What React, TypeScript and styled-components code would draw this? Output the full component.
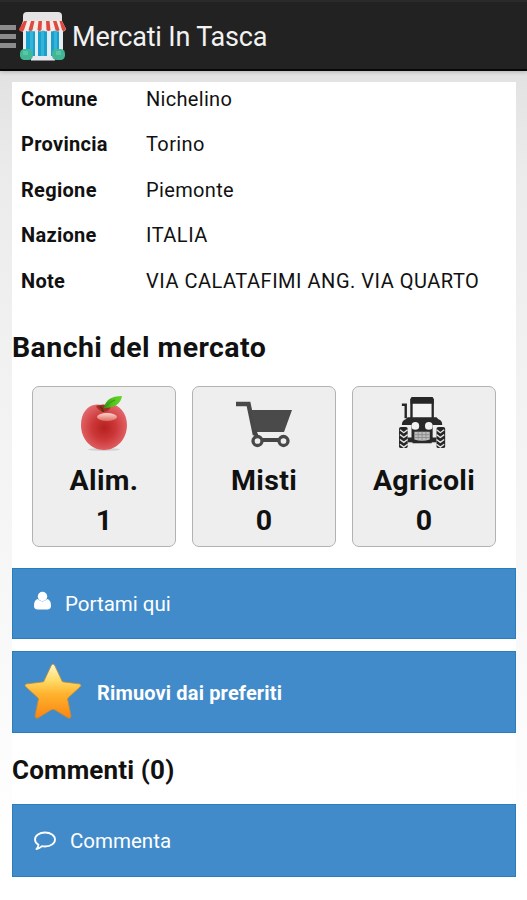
import React from "react";
import styled, { createGlobalStyle } from "styled-components";

const GlobalStyle = createGlobalStyle`
  * { box-sizing: border-box; }
  body {
    margin: 0;
    background: #fff;
    font-family: Roboto, "Liberation Sans", sans-serif;
    color: #111;
  }
  svg { display: block; flex: none; }
`;

const Screen = styled.div`
  width: 527px;
  height: 900px;
  display: flex;
  flex-direction: column;
  overflow: hidden;
  background: linear-gradient(#e2e2e2 70px, #ebebeb 170px, #f1f1f1 360px, #f8f8f8 620px, #fff 850px);
`;

const AppBar = styled.header`
  height: 71px;
  flex: none;
  display: flex;
  align-items: center;
  background: #222;
  border-top: 2px solid #2a2a2a;
  border-bottom: 2px solid #080808;
  box-shadow: 0 1px 4px rgba(0, 0, 0, 0.22);
`;

const MenuLines = styled.div`
  width: 16px;
  height: 23px;
  flex: none;
  display: flex;
  flex-direction: column;
  justify-content: space-between;
  margin-top: 2px;
  span {
    height: 5px;
    background: #8c8c8c;
  }
`;

const AppTitle = styled.h1`
  margin: 2px 0 0 6px;
  font-size: 27px;
  font-weight: 400;
  line-height: 32px;
  letter-spacing: -0.18px;
  color: #f2f2f2;
  white-space: nowrap;
`;

const Panel = styled.main`
  width: 504px;
  flex: 1;
  margin: 11px 0 0 12px;
  background: #fff;
`;

const Details = styled.dl`
  margin: 0;
`;

const DetailRow = styled.div`
  height: 45.4px;
  display: grid;
  grid-template-columns: 125px 1fr;
  padding-left: 9px;
  font-size: 20px;
  line-height: 35px;
`;

const Label = styled.dt`
  font-weight: 700;
  letter-spacing: 0.3px;
`;

const Value = styled.dd<{ $spacing: number }>`
  margin: 0;
  letter-spacing: ${(p) => p.$spacing}px;
  white-space: nowrap;
`;

const Heading = styled.h2<{ $top: number; $size: number; $spacing: number }>`
  margin: ${(p) => p.$top}px 0 0;
  font-size: ${(p) => p.$size}px;
  letter-spacing: ${(p) => p.$spacing}px;
  line-height: 32px;
  font-weight: 700;
`;

const Stalls = styled.div`
  display: flex;
  gap: 16px;
  margin: 22px 20px 21px;
`;

const StallCard = styled.div`
  flex: 1;
  height: 161px;
  display: flex;
  flex-direction: column;
  align-items: center;
  padding-top: 8px;
  background: #eee;
  border: 1.5px solid #b2b2b2;
  border-radius: 7px;
  font-size: 28.5px;
  font-weight: 700;
  line-height: 39.5px;
`;

const StallName = styled.span`
  margin-top: 6.5px;
  letter-spacing: 0.35px;
`;

const Action = styled.button<{ $height: number; $top?: number; $bold?: boolean; $left: number; $gap: number; $spacing: number }>`
  width: 100%;
  height: ${(p) => p.$height}px;
  margin: ${(p) => p.$top ?? 0}px 0 0;
  padding: 2px 0 0 ${(p) => p.$left}px;
  display: flex;
  align-items: center;
  gap: ${(p) => p.$gap}px;
  border: 1px solid #2a7dbd;
  background: #428bca;
  color: #fff;
  font: ${(p) => (p.$bold ? 700 : 400)} ${(p) => (p.$bold ? 20 : 20.5)}px Roboto, "Liberation Sans", sans-serif;
  letter-spacing: ${(p) => p.$spacing}px;
`;

const Raised = styled.span<{ $by: number }>`
  padding-bottom: ${(p) => p.$by}px;
`;

const ShopIcon = () => (
  <svg width="50" height="54" viewBox="0 0 50 54">
    <rect x="7" y="20" width="40" height="30" fill="#e4edf0" />
    <path d="M10 21h9v28h-9zM22 21h9v27h-9zM35 21h8v28h-8z" fill="#1b9fcd" />
    <path d="M14 21h3v28h-3zM25 21h3v27h-3zM38 21h3v28h-3z" fill="#35b4da" />
    <path d="M15 47h24v4.500H15z" fill="#e6eaf0" />
    <path d="M11 3h31q4 0 4 4v6H7V7q0-4 4-4z" fill="#e4e4e4" />
    <path d="M7 12h39l4 8q-1 2.500-3 2.500l-2-1-3 1-3-1-3 1-3-1-3 1-3-1-3 1-3-1-3 1-3-1-3 1-3-1-2 1q-3 0-3-2.500z" fill="#f5ebe7" />
    <path d="M8 12h3l-3 9q-1 1.500-2 1.500-3 0-3-2.500zM15 12h3.500l-2 9q-2 2-4 0zM22.500 12H26l-.500 9q-2 2-4 0zM30 12h3.500l1 9q-2 2-4 0zM37 12h3.500l3 9q-2 2-4 0zM43.500 12H46l4 8q-1 2.500-3 2l-1-1z" fill="#df4940" />
    <rect x="4" y="40" width="13" height="11" rx="4.500" fill="#43b795" />
    <rect x="36" y="40" width="13" height="11" rx="4.500" fill="#43b795" />
    <path d="M7 42h5v4H7zM40 42h5v4h-5z" fill="#58c7a7" />
  </svg>
);

const AppleIcon = () => (
  <svg width="56" height="60" viewBox="0 0 56 60">
    <defs>
      <radialGradient id="appleSkin" cx="50%" cy="52%" r="54%">
        <stop offset="0" stopColor="#b5221f" />
        <stop offset=".45" stopColor="#cb3536" />
        <stop offset="1" stopColor="#e2666a" />
      </radialGradient>
      <linearGradient id="shine" x2="0" y2="1">
        <stop stopColor="#fbd5cb" />
        <stop offset="1" stopColor="#de6a62" />
      </linearGradient>
      <linearGradient id="leaf" x2="1" y2="0">
        <stop stopColor="#2f9a13" />
        <stop offset=".5" stopColor="#58c41c" />
        <stop offset="1" stopColor="#62d52a" />
      </linearGradient>
    </defs>
    <ellipse cx="28" cy="54.500" rx="16" ry="1.500" fill="#d2d2d2" />
    <path d="M27 11C16 6 5 15 5 30c0 14 10 25 23 25s23-11 23-25C51 15 39 5 27 11z" fill="url(#appleSkin)" />
    <path d="M20 11q7-3 15 0-1 5-7 6-6-1-8-6z" fill="#a62f25" />
    <ellipse cx="31" cy="22" rx="10" ry="4" fill="url(#shine)" />
    <path d="M26 17q0-3-3-5l2-1q3 2 3 6z" fill="#693015" />
    <path d="M28 13Q30 1 46 1q-2 12-18 12z" fill="url(#leaf)" />
    <path d="M29 12q6-6 10-7" fill="none" stroke="#2f9018" />
  </svg>
);

const CartIcon = () => (
  <svg width="58" height="60" viewBox="0 0 58 60" fill="none">
    <path d="M1 9h12.500L20 40" stroke="#484848" strokeWidth="4.500" />
    <path d="M15.500 15H57l-8 22H20z" fill="#4a4a4a" />
    <path d="M22 45h26M19 35l3 7" stroke="#454545" strokeWidth="4" />
    <circle cx="22.500" cy="46" r="4.500" fill="#eee" stroke="#484848" strokeWidth="3.300" />
    <circle cx="48.500" cy="46" r="4.500" fill="#eee" stroke="#484848" strokeWidth="3.300" />
  </svg>
);

const TractorIcon = () => (
  <svg width="50" height="60" viewBox="1 0 52 62" fill="none">
    <path d="M14 25V5h22v20" stroke="#262626" strokeWidth="2.500" />
    <path d="M15.500 8h19v16h-19z" fill="#f3f3f3" />
    <path d="M14 2h22l1 2v5H13V4z" fill="#262626" />
    <path d="M4 10h4v14" stroke="#262626" strokeWidth="2.500" />
    <path d="M4 31q0-5 4-6l2-2h30l2 2q4 1 4 6H36v14q-11 6-22 0V31z" fill="#292929" />
    <path d="M10 44h30v5H10z" fill="#292929" />
    <path d="M15 44h20v6H15z" fill="#292929" />
    <circle cx="18" cy="32" r="4" fill="#f3f3f3" />
    <circle cx="32" cy="32" r="4" fill="#f3f3f3" />
    <path d="M17 38h16v8q-8 3-16 0z" fill="#bcbcbc" />
    <path d="M17 41h16M17 44h16M21 38v8M25 38v9M29 38v8" stroke="#8f8f8f" />
    <rect x="1" y="33" width="9" height="22" rx="2" fill="#262626" />
    <rect x="40" y="33" width="9" height="22" rx="2" fill="#262626" />
    <path d="M2 36l4 3 4-3M2 41l4 3 4-3M2 46l4 3 4-3M2 51l4 3 4-3M40 36l4 3 4-3M40 41l4 3 4-3M40 46l4 3 4-3M40 51l4 3 4-3" stroke="#e4e4e4" strokeWidth="1.400" />
  </svg>
);

const UserIcon = () => (
  <svg width="17" height="19" viewBox="0 0 18 19" fill="#fff">
    <circle cx="9" cy="5.300" r="5" />
    <path d="M4 8q5 5 10 0 4 1 4 7 0 4-4 4H4q-4 0-4-4 0-6 4-7z" />
  </svg>
);

const StarIcon = () => (
  <svg width="58" height="58" viewBox="0 0 58 58">
    <defs>
      <linearGradient id="gold" x2="0" y2="1">
        <stop stopColor="#fff8ce" />
        <stop offset=".3" stopColor="#ffdb68" />
        <stop offset=".55" stopColor="#ffb32e" />
        <stop offset="1" stopColor="#f98513" />
      </linearGradient>
    </defs>
    <path d="M29 2q1 0 2 2l7 15q0 1 2 1l16 2q2 1 0 3L44 36q-1 1 0 3l3 15q0 3-3 2L31 48q-2-1-4 0l-13 8q-3 1-3-2l3-15q1-2 0-3L2 25q-2-2 0-3l16-2q2 0 2-1l7-15q1-2 2-2z" fill="url(#gold)" stroke="#b98a3d" strokeWidth=".8" />
  </svg>
);

const CommentIcon = () => (
  <svg width="22" height="20" viewBox="0 0 22 20" fill="none" stroke="#fff" strokeWidth="1.800" strokeLinejoin="round">
    <path d="M11 1.500c5.500 0 10 3 10 7s-4.500 7-10 7q-1.500 0-3-.3-2.500 2.300-5.500 2.800 1.500-1.500 2-4.200C2.300 12.500 1 10.700 1 8.500c0-4 4.500-7 10-7z" />
  </svg>
);

const details = [
  { label: "Comune", value: "Nichelino", spacing: 0.3 },
  { label: "Provincia", value: "Torino", spacing: 0.4 },
  { label: "Regione", value: "Piemonte", spacing: 0.35 },
  { label: "Nazione", value: "ITALIA", spacing: 0.5 },
  { label: "Note", value: "VIA CALATAFIMI ANG. VIA QUARTO", spacing: 0.52 },
];

const stalls = [
  { name: "Alim.", count: 1, icon: <AppleIcon /> },
  { name: "Misti", count: 0, icon: <CartIcon /> },
  { name: "Agricoli", count: 0, icon: <TractorIcon /> },
];

export default function App() {
  return (
    <>
      <GlobalStyle />
      <Screen>
        <AppBar>
          <MenuLines><span /><span /><span /></MenuLines>
          <ShopIcon />
          <AppTitle>Mercati In Tasca</AppTitle>
        </AppBar>
        <Panel>
          <Details>
            {details.map((d) => (
              <DetailRow key={d.label}>
                <Label>{d.label}</Label>
                <Value $spacing={d.spacing}>{d.value}</Value>
              </DetailRow>
            ))}
          </Details>
          <Heading $top={23} $size={28.5} $spacing={0.42}>Banchi del mercato</Heading>
          <Stalls>
            {stalls.map((s) => (
              <StallCard key={s.name}>
                {s.icon}
                <StallName>{s.name}</StallName>
                <span>{s.count}</span>
              </StallCard>
            ))}
          </Stalls>
          <Action $height={71} $left={21} $gap={14} $spacing={0}>
            <Raised $by={8}><UserIcon /></Raised>
            Portami qui
          </Action>
          <Action $height={82} $top={12} $left={11} $gap={15} $spacing={0.15} $bold>
            <Raised $by={3}><StarIcon /></Raised>
            Rimuovi dai preferiti
          </Action>
          <Heading $top={21} $size={26} $spacing={0.15}>Commenti (0)</Heading>
          <Action $height={73} $top={18} $left={21} $gap={14} $spacing={0}>
            <CommentIcon />
            Commenta
          </Action>
        </Panel>
      </Screen>
    </>
  );
}
